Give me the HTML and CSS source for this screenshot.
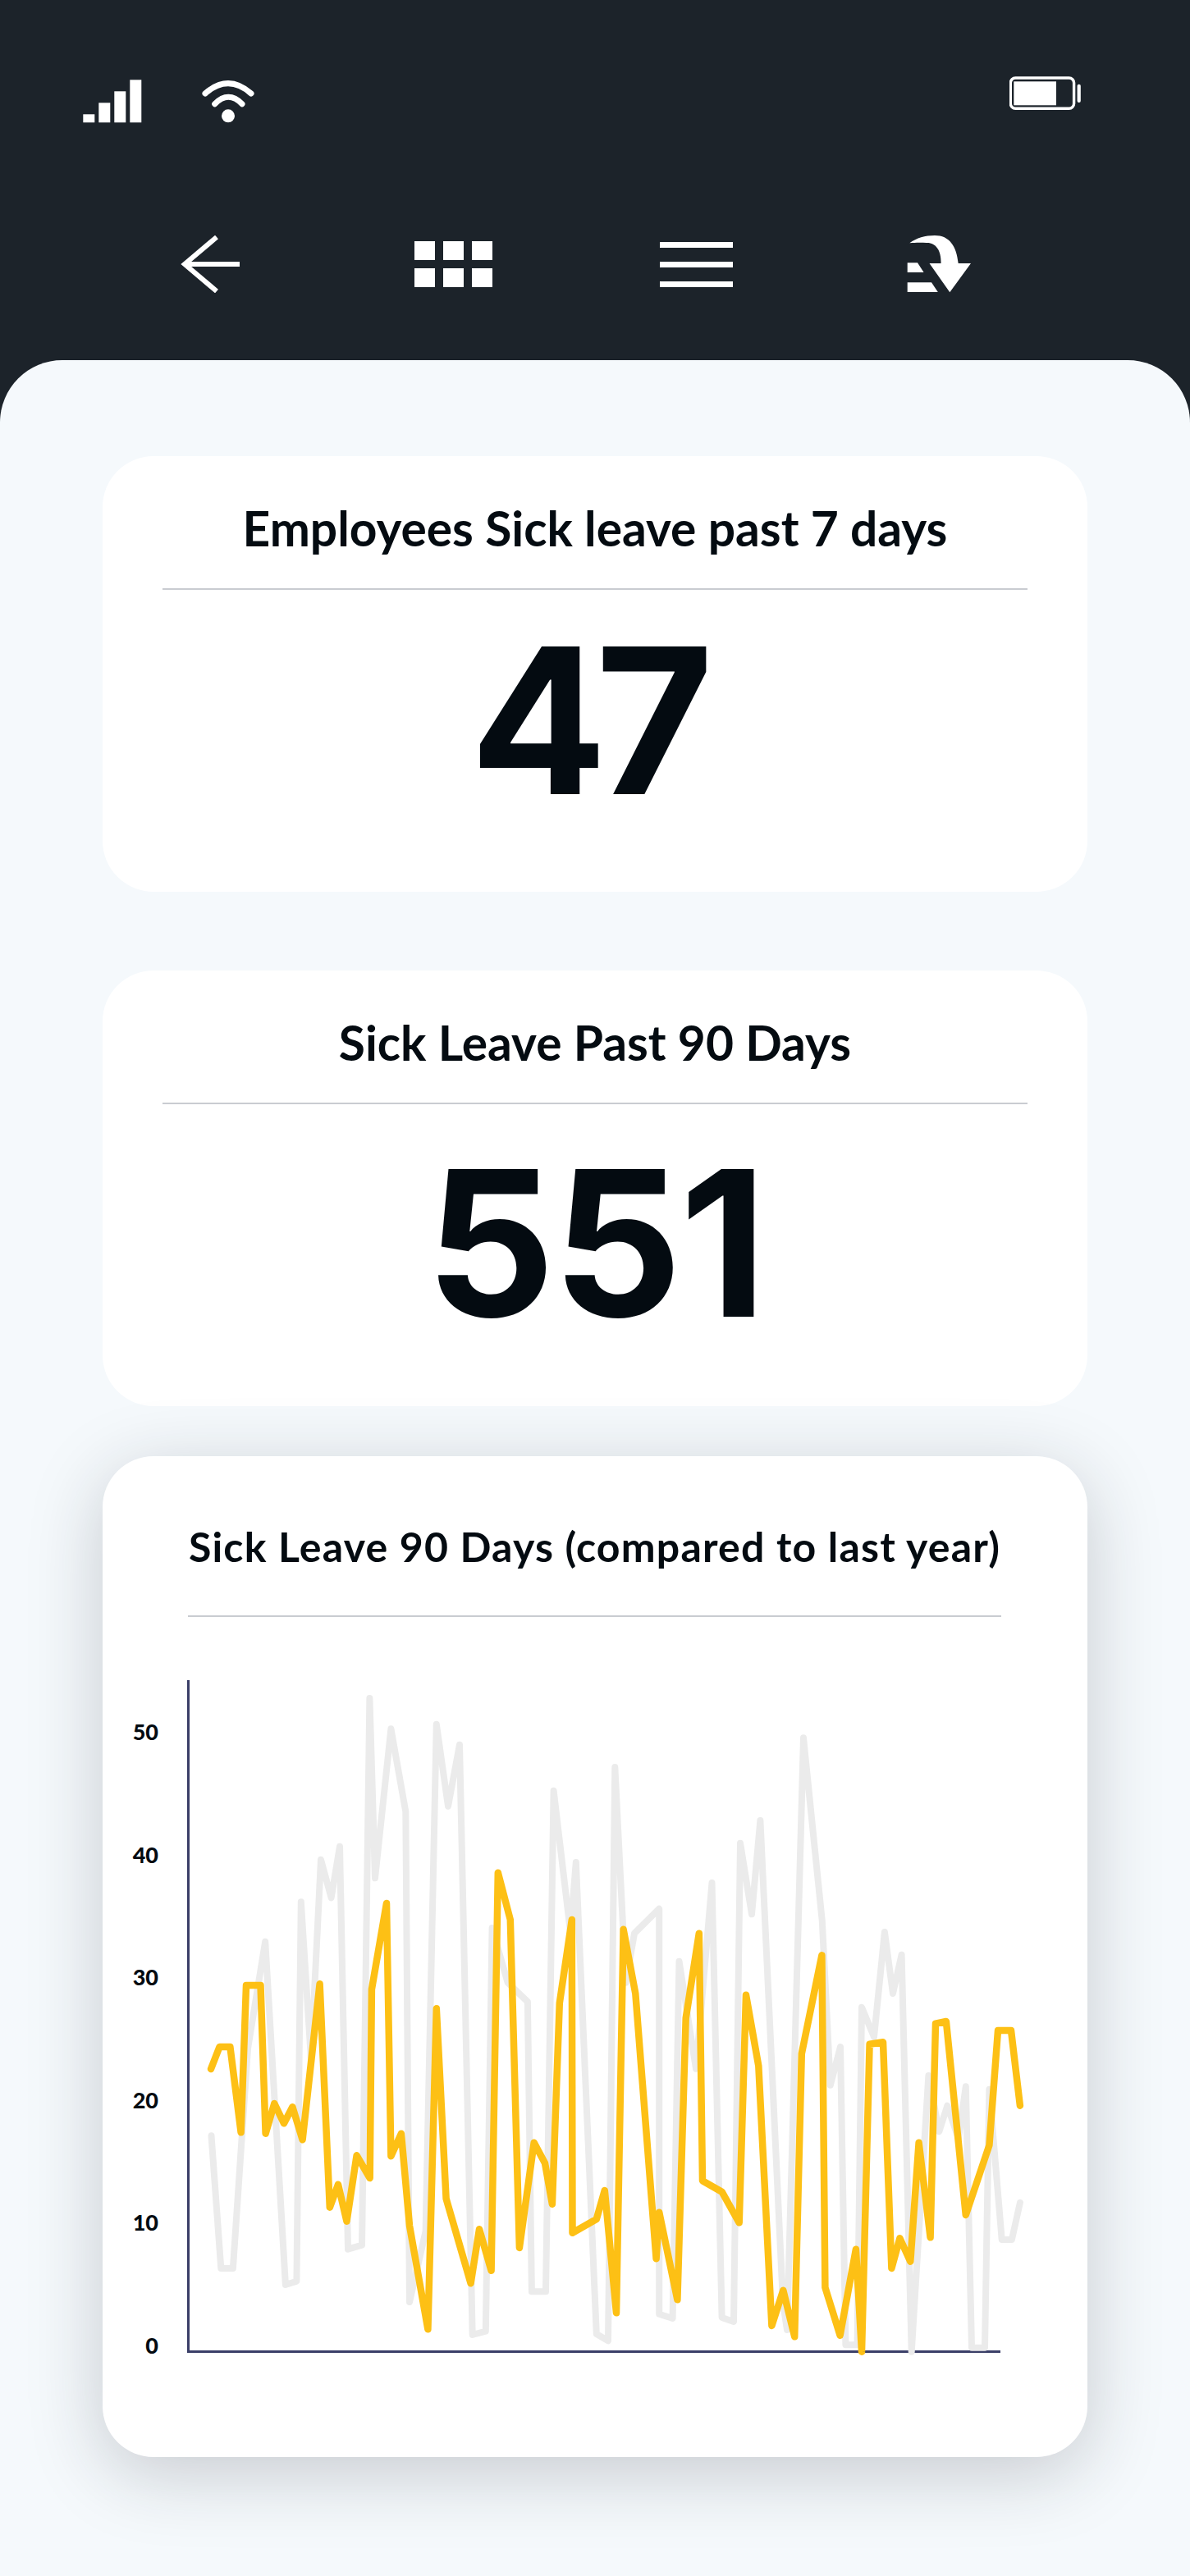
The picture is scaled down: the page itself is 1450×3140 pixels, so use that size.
FILE: index.html
```html
<!DOCTYPE html>
<html lang="en">
<head>
    <meta charset="UTF-8">
    <meta name="viewport" content="width=device-width, initial-scale=1.0">
    <title>Sick Leave</title>
    <link rel="stylesheet" href="styles.css">
</head>
<body>
    <header class="top">
        <!-- Status bar -->
        <div class="status">
            <div class="status-left">
                <svg class="icon-signal" width="72" height="53" viewBox="0 0 72 53" fill="#fff">
                    <rect x="0.300" y="42.300" width="14" height="10"/>
                    <rect x="19.300" y="28.300" width="14" height="24"/>
                    <rect x="38.300" y="14.300" width="14" height="38"/>
                    <rect x="57.300" y="0.300" width="14" height="52"/>
                </svg>
                <svg class="icon-wifi" width="64" height="53" viewBox="0 0 64 53">
                    <path d="M4 17 Q32 -7.600 60 17" fill="none" stroke="#fff" stroke-width="7" stroke-linecap="round"/>
                    <path d="M15.700 29.700 Q32.300 12.900 49 29.700" fill="none" stroke="#fff" stroke-width="7" stroke-linecap="round"/>
                    <circle cx="32" cy="44.300" r="8" fill="#fff"/>
                </svg>
            </div>
            <svg class="icon-battery" width="88" height="44" viewBox="0 0 88 44">
                <rect x="1.300" y="3" width="77.300" height="37.300" rx="6" fill="none" stroke="#fff" stroke-width="3.400"/>
                <rect x="5.300" y="7.300" width="51.700" height="29" fill="#fff"/>
                <rect x="82.600" y="10.700" width="4.200" height="22.300" rx="2" fill="#fff"/>
            </svg>
        </div>

        <!-- Toolbar -->
        <nav class="toolbar">
            <svg width="74" height="70" viewBox="0 0 74 70" fill="none" stroke="#fff" stroke-width="6">
                <path d="M45 2 L6 35 L45 68"/>
                <path d="M6 35 H73"/>
            </svg>
            <div class="grid-icon">
                <span></span><span></span><span></span>
                <span></span><span></span><span></span>
            </div>
            <div class="menu-icon"><span></span><span></span><span></span></div>
            <svg width="79" height="70" viewBox="0 0 79 70" fill="#fff">
                <path d="M3.300 9.300 C12 3 22 0 34 0 C52 0 60.500 13 62.700 34 H78 L52.300 69.300 L27.500 34 H41.600 C42 18 35 8.500 24 9 C16 8.600 9 8.800 3.300 9.300 Z"/>
                <path d="M0.700 33.300 H13 L20.600 45 H0.700 Z"/>
                <path d="M0.700 57.300 H30 L37.800 69 H0.700 Z"/>
            </svg>
        </nav>
    </header>

    <main class="panel">
        <section class="card">
            <h2>Employees Sick leave past 7 days</h2>
            <div class="big-number big-number-tight">47</div>
        </section>

        <section class="card">
            <h2>Sick Leave Past 90 Days</h2>
            <div class="big-number big-number-low">551</div>
        </section>

        <section class="card card-chart">
            <h2>Sick Leave 90 Days (compared to last year)</h2>
            <svg class="chart" width="1200" height="860" viewBox="125 2040 1200 860">
                <g class="axis-labels">
                    <text x="193" y="2114">50</text>
                    <text x="193" y="2264">40</text>
                    <text x="193" y="2413">30</text>
                    <text x="193" y="2563">20</text>
                    <text x="193" y="2712">10</text>
                    <text x="193" y="2862">0</text>
                </g>
                <path class="axis" d="M229.500 2048 V2866.500 H1219"/>
                <polyline class="line-grey" points="257.5,2603.3 269.3,2765 283.9,2765 302,2497 323.2,2366.7 347.9,2785 361.4,2780.7 366.8,2318.3 379,2510 391,2266.7 403.6,2313.3 414,2250.7 424,2741.7 441,2736.7 450.4,2070 457,2289.3 476.4,2107.3 494.3,2208.3 499,2806 518.6,2720 531.8,2101.7 546,2201.7 560,2126.7 575.7,2846 591.8,2841.7 599.6,2350 618.6,2416.7 642.9,2440 647.9,2793.3 665,2793.3 674.6,2182.7 695,2355 701.8,2270 726.8,2845 741,2853.3 749.3,2154 762.5,2416.7 773,2356.7 803.2,2326.7 803.2,2820.7 819.6,2826 827.5,2390.7 848,2521.7 867.5,2295 879.6,2825 894,2830 902,2246.7 916,2333.3 926.4,2219 954,2807 959,2840 979,2118.3 1001.8,2341.7 1011.8,2541.7 1024,2495 1030.4,2858.3 1044.6,2858.3 1050,2446.7 1065,2483 1077.9,2355 1088,2430 1098.6,2382.7 1110.7,2866.7 1131.4,2530 1144.3,2598.3 1154.3,2566.7 1167.9,2606.7 1176.8,2543.3 1184,2861.7 1200,2861.7 1205.4,2546.7 1220.7,2730 1232.9,2730 1242.9,2685"/>
                <polyline class="line-yellow" points="257,2522 267.5,2495 280.4,2495 293.6,2599.3 300,2420 317.5,2420 323.6,2600.7 334.3,2564 346,2588.3 356.4,2568.3 368.6,2608.3 389.6,2418.3 401.8,2690.7 412,2662.7 422.5,2707.7 434.6,2627.3 450.7,2655 452.9,2425 471,2320 476.4,2628.3 488.9,2600.7 499,2713 521.4,2839.3 531.8,2448.3 543.6,2680 573.6,2783.3 584,2717.3 598.6,2767.7 606.8,2282.7 621.8,2340 632.9,2740 650.7,2611.7 664,2636.7 672.9,2686.7 681.8,2441.7 696.8,2340 697.5,2721.7 726.8,2705 736.8,2670 751,2819.3 759.6,2351.7 774.3,2430 799.6,2753.3 803.2,2696.7 825.4,2803.3 835.7,2460 851.8,2356.7 856,2658.3 879.6,2671.7 900.7,2709.3 909,2431.7 924.3,2518.3 940.4,2835 954.3,2791.7 968.2,2848.3 976.8,2503.3 1001.4,2383.3 1005.4,2788.3 1023.6,2846.7 1042.9,2741.7 1050,2866.7 1059.6,2491.7 1076,2489.3 1086.4,2765 1096.4,2728.3 1109.3,2756.7 1119.6,2611.7 1133.6,2727.3 1140,2466.7 1152.9,2464 1176.8,2700 1205.4,2615 1216,2475 1232,2475 1242.9,2566.7"/>
            </svg>
        </section>
    </main>
</body>
</html>
```

FILE: styles.css
```css
body {
    margin: 0;
    padding: 0;
    background-color: #1c232a;
    font-family: "Lato", Arial, sans-serif;
    color: #040b11;
}

.top {
    height: 439px;
    box-sizing: border-box;
    padding-top: 92px;
}

.status {
    display: flex;
    justify-content: space-between;
    align-items: flex-start;
    padding: 0 132px 0 101px;
}

.status-left {
    display: flex;
    gap: 73px;
    padding-top: 5px;
}

/* Four equal slots, one icon centred in each */
.toolbar {
    display: grid;
    grid-template-columns: repeat(4, 296px);
    justify-items: center;
    align-items: center;
    margin-top: 137px;
    padding-left: 108px;
}

.grid-icon {
    display: grid;
    grid-template-columns: repeat(3, 25px);
    grid-template-rows: repeat(2, 23px);
    gap: 10px;
}

.grid-icon span {
    background-color: #fff;
}

.menu-icon {
    width: 89px;
    display: flex;
    flex-direction: column;
    gap: 17px;
}

.menu-icon span {
    height: 7px;
    background-color: #fff;
}

.panel {
    height: 2701px;
    box-sizing: border-box;
    padding: 117px 125px 0;
    background-color: #f5f9fc;
    border-radius: 76px 76px 0 0;
    overflow: hidden;
}

.card {
    height: 531px;
    box-sizing: border-box;
    margin-bottom: 96px;
    padding: 0 73px;
    background-color: #fff;
    border-radius: 62px;
    text-align: center;
}

.card h2 {
    margin: 0;
    height: 163px;
    box-sizing: border-box;
    padding-top: 58px;
    border-bottom: 2px solid #c9ccd1;
    font-size: 58.7px;
    line-height: 60px;
    font-weight: 700;
    white-space: nowrap;
}

.big-number {
    font-family: "Inter", Arial, sans-serif;
    font-size: 247px;
    line-height: 320px;
    font-weight: 700;
    letter-spacing: -3px;
}

.big-number-tight {
    padding-right: 22px;
    letter-spacing: -14px;
}

.big-number-low {
    padding-top: 10px;
}

.card-chart {
    height: 1220px;
    margin: -35px 0 0;
    padding: 0;
    box-shadow: 0 20px 90px rgba(28, 35, 42, 0.21);
}

.card-chart h2 {
    height: 196px;
    margin: 0 105px 69px 104px;
    padding-top: 80px;
    font-size: 50px;
    letter-spacing: 1.2px;
}

.chart {
    display: block;
}

.axis-labels text {
    font-family: "Lato", Arial, sans-serif;
    font-size: 27px;
    font-weight: 900;
    text-anchor: end;
    dominant-baseline: middle;
    fill: #040b11;
}

.axis {
    fill: none;
    stroke: #3b3f68;
    stroke-width: 3px;
}

.line-grey {
    fill: none;
    stroke: #ebebeb;
    stroke-width: 8px;
    stroke-linejoin: round;
    stroke-linecap: round;
}

.line-yellow {
    fill: none;
    stroke: #fdc015;
    stroke-width: 8.5px;
    stroke-linejoin: round;
    stroke-linecap: round;
}
```
